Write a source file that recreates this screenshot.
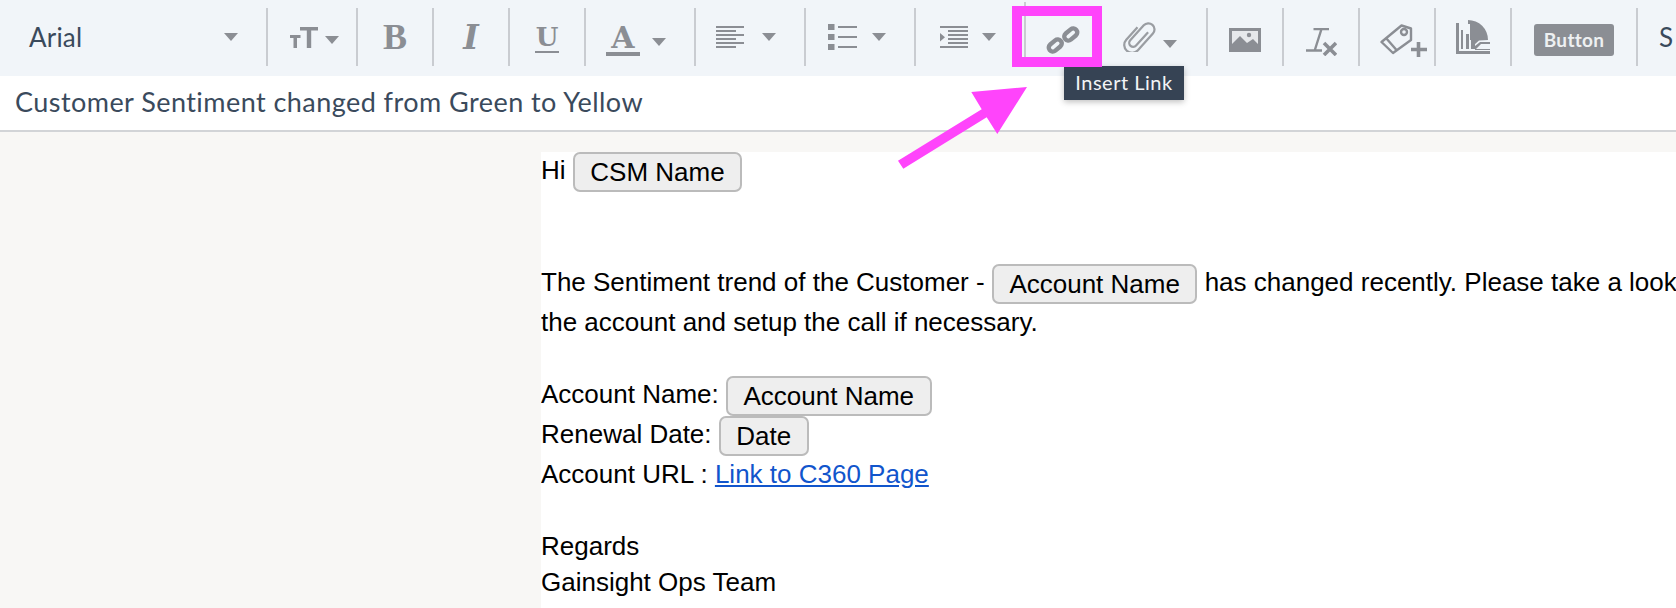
<template>
  <div class="page">
    <div class="toolbar">
      <div class="cell font-cell">
        <span class="font-name">Arial</span>
        <span class="caret"></span>
      </div>
      <div class="cell w90 pad-22">
        <svg class="glyphs" width="30" height="24" viewBox="0 0 30 24">
          <path d="M10 2H28V5.500H21.200V23H16.800V5.500H10Z" />
          <path d="M0 10H10.500V13H7V23H3.500V13H0Z" />
        </svg>
        <span class="caret small-gap caret-low"></span>
      </div>
      <div class="cell w76 center"><span class="g-b">B</span></div>
      <div class="cell w76 center"><span class="g-i">I</span></div>
      <div class="cell w76 center"><span class="g-u">U</span></div>
      <div class="cell w110 pad-20 low-10">
        <span class="g-a">A</span>
        <span class="caret gap-12"></span>
      </div>
      <div class="cell w110 pad-20">
        <svg width="28" height="23" viewBox="0 0 28 23">
          <path d="M0 0H28V2H0ZM0 4H20V6H0ZM0 8H28V10H0ZM0 12H20V14H0ZM0 16H28V18H0ZM0 20H20V22H0Z" />
        </svg>
        <span class="caret gap-18"></span>
      </div>
      <div class="cell w110 pad-22">
        <svg width="29" height="27" viewBox="0 0 29 27">
          <path d="M0 0H6.500V6H0ZM0 10H6.500V16H0ZM0 20H6.500V26H0ZM10 2H29V4H10ZM10 12H29V14H10ZM10 22H29V24H10Z" />
        </svg>
        <span class="caret gap-15"></span>
      </div>
      <div class="cell w110 pad-24 tall">
        <svg width="28" height="23" viewBox="0 0 28 23">
          <path d="M0 0H28V2H0ZM8 4H28V6H8ZM8 8H28V10H8ZM8 12H28V14H8ZM8 16H28V18H8ZM0 20H28V22H0ZM0 7L5 11.200L0 15.500Z" />
        </svg>
        <span class="caret gap-14"></span>
      </div>
      <div class="cell w182 pad-20">
        <svg class="low-icon" width="36" height="28" viewBox="0 0 36 28" fill="none">
          <rect class="chain" x="2" y="15.500" width="14.500" height="8" rx="4" transform="rotate(-40 9.250 19.500)" />
          <rect class="chain" x="17.500" y="4.500" width="14.500" height="8" rx="4" transform="rotate(-40 24.750 8.500)" />
        </svg>
        <svg class="clip" width="36" height="30" viewBox="0 0 36 30" fill="none">
          <g transform="translate(18 15) rotate(42) scale(1.120) translate(-8.500 -17)">
            <path d="M11 9V25a3.500 3.500 0 0 1-7 0V7a5.500 5.500 0 0 1 11 0V27a7 7 0 0 1-14 0V12" />
          </g>
        </svg>
        <span class="caret gap-5 caret-13"></span>
      </div>
      <div class="cell w76 center">
        <svg class="low-icon" width="32" height="24" viewBox="0 0 32 24">
          <path d="M0 0H32V24H0Z" />
          <path class="light" d="M3 3H29V16L24 11L18 15L11 8L3 16Z" />
          <circle cx="20" cy="7" r="2.200" />
        </svg>
      </div>
      <div class="cell w76 center">
        <svg class="low-10" width="31" height="28" viewBox="0 0 31 28" fill="none">
          <path class="thin" d="M7.500 1H23M15.500 1L9 21.500M0 22.500H16" />
          <path class="thick" d="M18 15L30 27M30 15L18 27" />
        </svg>
      </div>
      <div class="cell w76 center">
        <svg class="tag" width="47" height="33" viewBox="0 0 47 33" fill="none">
          <path class="thin-round" d="M1.500 18L21.500 1.500L31 4.500L31 16L13 29Z" />
          <circle class="thin-round" cx="24" cy="8" r="3" />
          <path class="thin-round" d="M6 14L16.500 26" />
          <path class="thick" d="M38.500 18V33M31 25.500H47" />
        </svg>
      </div>
      <div class="cell w76 center">
        <svg width="34" height="34" viewBox="0 0 34 34">
          <path d="M12 0A20 20 0 0 1 32 20L23 20.500L18 25V20H14V4L12 4Z" />
          <path d="M0 3H3V31H34V34H0Z" />
          <path d="M5 10H7V29H5ZM10 14H13V29H10ZM15 19H19V29H15Z" />
          <path d="M19 26L24 22H34V24H25L20 29H34V30H19Z" />
        </svg>
      </div>
      <div class="cell w126 center">
        <span class="fake-button">Button</span>
      </div>
      <div class="cell last"><span class="font-name">S</span></div>
    </div>

    <div class="subject">Customer Sentiment changed from Green to Yellow</div>

    <div class="canvas">
      <div class="mail">
        <div class="line">Hi <span class="token">CSM Name</span></div>
        <div class="line"></div>
        <div class="line"></div>
        <div class="line">The Sentiment trend of the Customer - <span class="token">Account Name</span> has changed recently. Please take a look</div>
        <div class="line">the account and setup the call if necessary.</div>
        <div class="line"></div>
        <div class="line">Account Name: <span class="token">Account Name</span></div>
        <div class="line">Renewal Date: <span class="token">Date</span></div>
        <div class="line">Account URL : <a class="link" href="#">Link to C360 Page</a></div>
        <div class="line"></div>
        <div class="line">Regards</div>
        <div class="line">Gainsight Ops Team</div>
      </div>
    </div>

    <div class="tooltip">Insert Link</div>
    <div class="highlight"></div>
    <svg class="arrow" width="1676" height="608" viewBox="0 0 1676 608">
      <polygon points="898,160.700 903.300,168.700 986.700,117.300 997.300,134 1027,87 971.300,92 981.700,109.300" />
    </svg>
  </div>
</template>

<style>
html, body { margin: 0; padding: 0; background: #fff; }
</style>

<style scoped>
.page {
  position: relative;
  width: 1676px;
  height: 608px;
  overflow: hidden;
  display: flex;
  flex-direction: column;
  font-family: "Liberation Sans", Arial, sans-serif;
}
.toolbar {
  height: 76px;
  box-sizing: border-box;
  padding-top: 8px;
  display: flex;
  align-items: flex-start;
  background: #f1f5f9;
  flex: none;
}
.cell {
  height: 58px;
  box-sizing: border-box;
  border-right: 2px solid #c9ccd1;
  display: flex;
  align-items: center;
  flex: none;
}
.cell svg { fill: #8b8e94; display: block; flex: none; }
.center { justify-content: center; }
.font-cell { width: 268px; padding-left: 29px; }
.w76 { width: 76px; }
.w90 { width: 90px; }
.w110 { width: 110px; }
.w126 { width: 126px; }
.w182 { width: 182px; }
.pad-20 { padding-left: 20px; }
.pad-22 { padding-left: 22px; }
.pad-24 { padding-left: 24px; }
.tall { height: 64px; margin-top: -6px; padding-top: 6px; }
.last { border-right: 0; padding-left: 21px; width: 38px; overflow: hidden; }
.font-name {
  font-family: Lato, "Open Sans", sans-serif;
  font-size: 26px;
  letter-spacing: 0.2px;
  color: #3a4a5c;
}
.font-cell .font-name { flex: 1; }
.font-cell .caret { margin-right: 28px; }
.caret {
  width: 0;
  height: 0;
  flex: none;
  border-left: 7.5px solid transparent;
  border-right: 7.5px solid transparent;
  border-top: 8px solid #8b8e94;
}
.small-gap { margin-left: 5px; }
.caret-low { margin-top: 5px; }
.gap-5 { margin-left: 5px; }
.gap-12 { margin-left: 12px; }
.gap-14 { margin-left: 14px; }
.gap-15 { margin-left: 15px; }
.gap-18 { margin-left: 18px; }
.caret-13 { margin-top: 13px; }
.low-icon { margin-top: 6px; }
svg.low-10 { margin-top: 10px; }
.g-b, .g-i, .g-u, .g-a { color: #8b8e94; line-height: 1; font-weight: 700; }
.g-b { font-family: "Liberation Serif", serif; font-size: 36px; }
.g-i { font-family: "DejaVu Serif", serif; font-size: 33px; font-style: italic; }
.g-u {
  font-family: "DejaVu Serif", serif;
  font-size: 26px;
  line-height: 26px;
  border-bottom: 2px solid #8b8e94;
  padding: 0 1px 1px;
  margin-top: 2px;
}
.g-a {
  font-family: "DejaVu Serif", serif;
  font-size: 30px;
  line-height: 28px;
  height: 28px;
  width: 34px;
  text-align: center;
  border-bottom: 4px solid #8b8e94;
  margin-top: 6px;
}
.low-10 .caret { margin-top: 9px; }
.clip { margin-left: 40px; }
.clip path { stroke: #9a9da2; stroke-width: 2; fill: none; }
.chain { stroke: #8b8e94; stroke-width: 4.400; fill: none; }
.light { fill: #e6e8eb; }
.thin { stroke: #8b8e94; stroke-width: 2.400; fill: none; }
.thick { stroke: #8b8e94; stroke-width: 3.600; fill: none; }
.thin-round { stroke: #8b8e94; stroke-width: 2.400; fill: none; stroke-linejoin: round; }
.tag { margin-top: 7px; margin-left: 13px; }
.fake-button {
  width: 80px;
  height: 32px;
  margin-top: 6px;
  border-radius: 3px;
  background: #8b8e94;
  color: #eef0f2;
  font-family: Lato, sans-serif;
  font-weight: 700;
  font-size: 19px;
  letter-spacing: 0.3px;
  line-height: 32px;
  text-align: center;
}
.subject {
  height: 54px;
  flex: none;
  padding-left: 15px;
  background: #fff;
  border-bottom: 2px solid #d2d4d7;
  font-family: Lato, "Open Sans", sans-serif;
  font-size: 27px;
  letter-spacing: 0.45px;
  line-height: 52px;
  color: #3a4a5c;
}
.canvas {
  flex: 1;
  min-height: 0;
  padding: 20px 0 0 541px;
  background: #f8f7f5;
}
.mail {
  height: 100%;
  background: #fff;
  color: #000;
  font-size: 26px;
  line-height: 36px;
  white-space: nowrap;
  overflow: hidden;
}
.line { min-height: 36px; }
.token {
  display: inline-block;
  padding: 0 15.500px;
  border: 2px solid #bbb;
  border-radius: 7px;
  background: #eee;
  vertical-align: top;
}
.link { color: #1155cc; text-decoration: underline; }
.tooltip {
  position: absolute;
  left: 1064px;
  top: 66px;
  width: 120px;
  height: 34px;
  background: #364354;
  color: #f2f4f6;
  box-shadow: 0 2px 6px rgba(0, 0, 0, 0.25);
  font-family: Lato, sans-serif;
  font-size: 20px;
  letter-spacing: 0.5px;
  line-height: 33px;
  text-align: center;
}
.highlight {
  position: absolute;
  left: 1012px;
  top: 6px;
  width: 90px;
  height: 61px;
  box-sizing: border-box;
  border: 10px solid #ff44fb;
}
.arrow { position: absolute; left: 0; top: 0; fill: #ff44fb; pointer-events: none; }
</style>
